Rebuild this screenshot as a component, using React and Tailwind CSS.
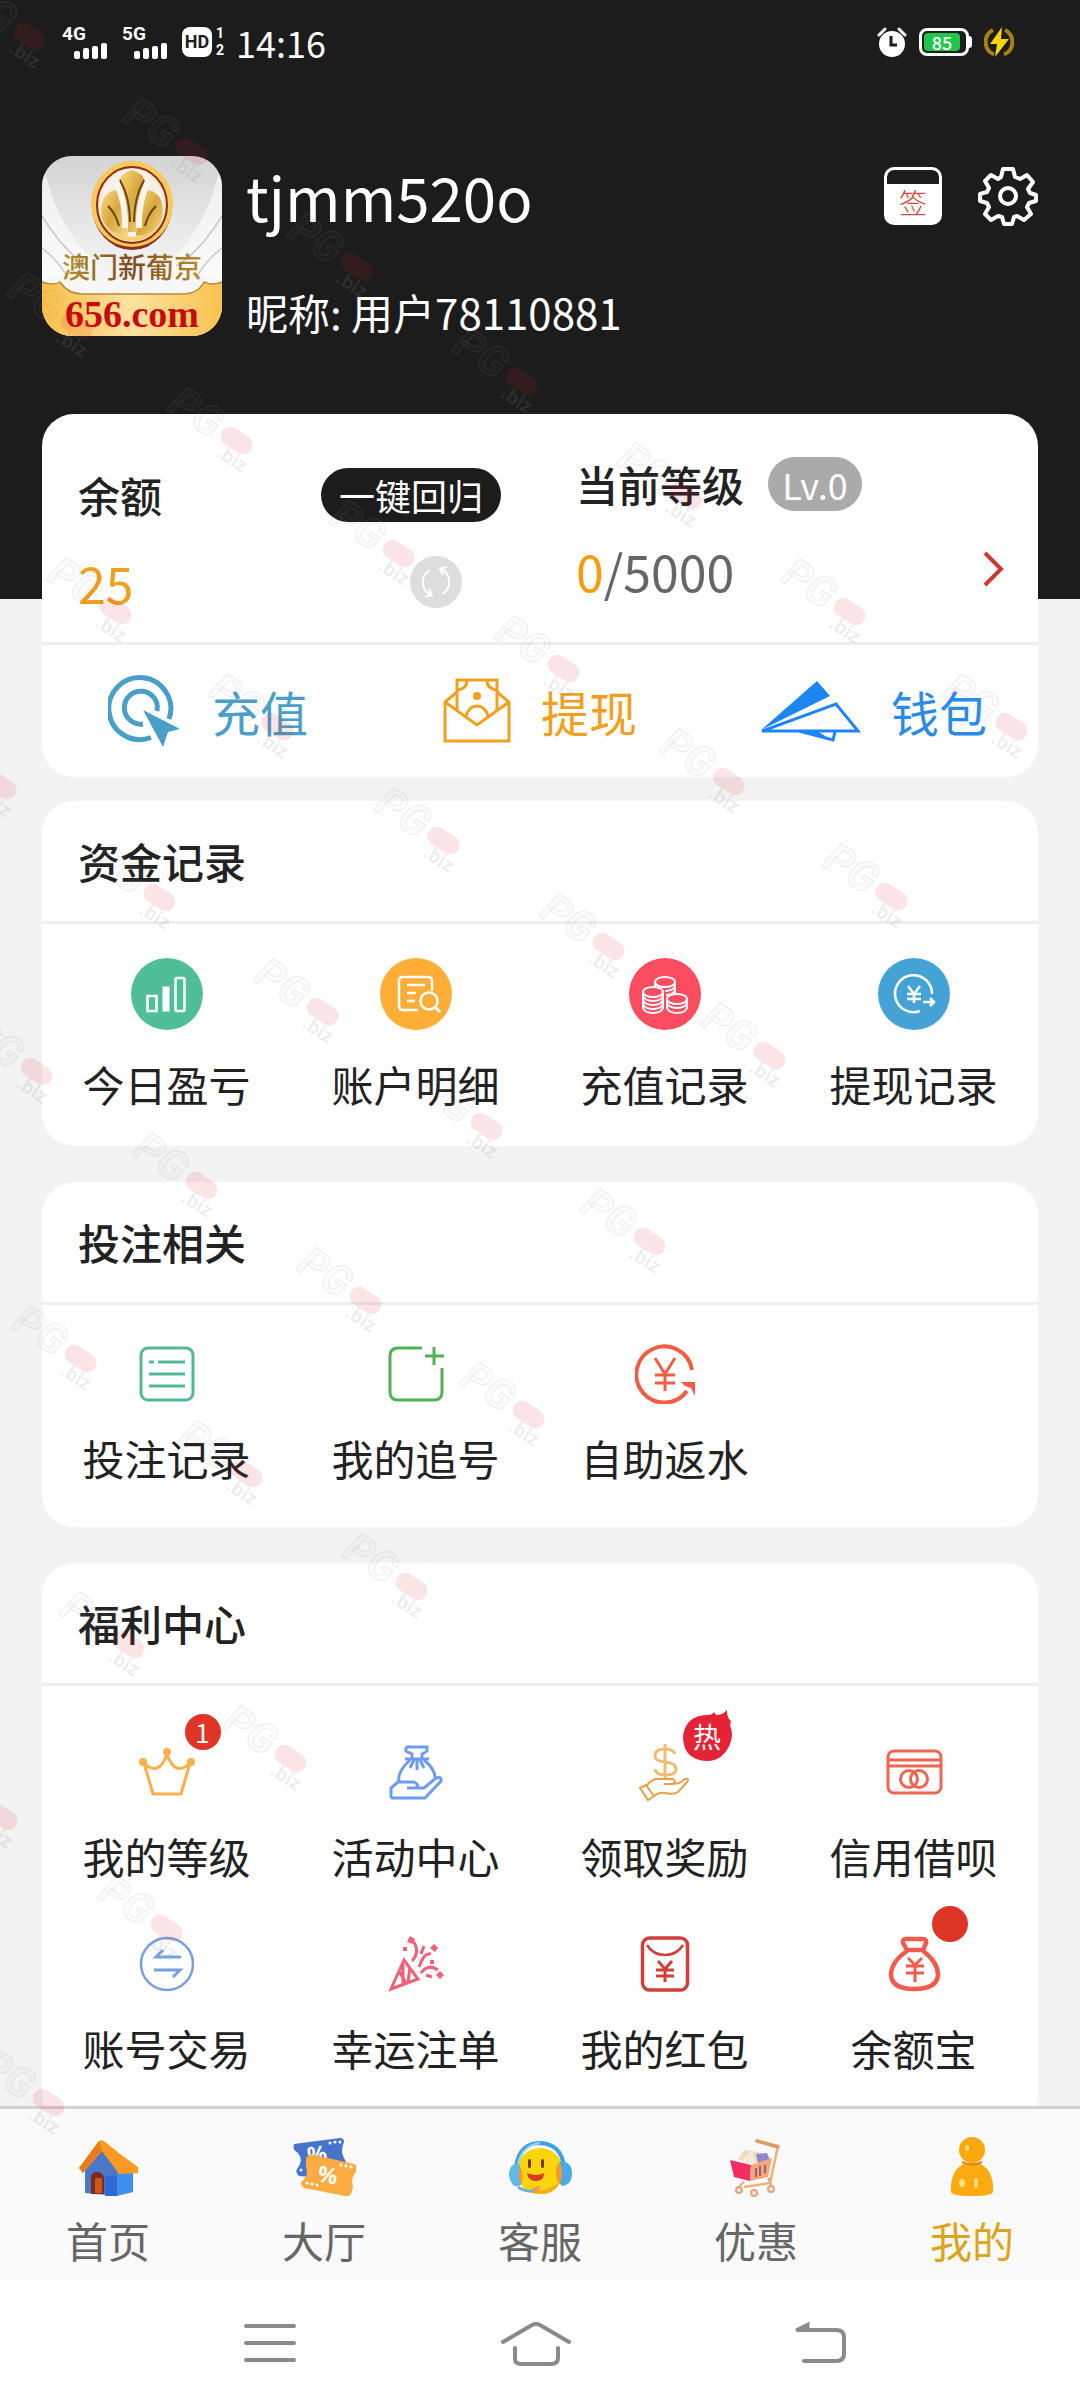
import React from "react";

/* ---------- status bar ---------- */

function Signal({ label }) {
  return (
    <span className="flex flex-col">
      <span className="font-[Roboto,sans-serif] text-[19px] leading-[18px] font-bold">{label}</span>
      <svg className="ml-3 h-4 w-9" viewBox="0 0 36 16" fill="currentColor" aria-hidden="true">
        <rect x="0" y="8" width="6" height="8" rx="2" />
        <rect x="9" y="5" width="6" height="11" rx="2" />
        <rect x="18" y="3" width="6" height="13" rx="2" />
        <rect x="27" y="0" width="6" height="16" rx="2" />
      </svg>
    </span>
  );
}

function StatusBar() {
  return (
    <div className="flex h-[84px] items-center justify-between pr-[66px] pl-[62px]">
      <div className="flex items-center gap-3">
        <Signal label="4G" />
        <Signal label="5G" />
        <span className="flex items-center gap-1 font-[Roboto,sans-serif] font-bold">
          <span className="flex h-[30px] w-[30px] items-center justify-center rounded-lg bg-white text-[18px] leading-none text-[#1c1c1c]">
            HD
          </span>
          <span className="flex flex-col text-[14px] leading-[17px]">
            <span>1</span>
            <span>2</span>
          </span>
        </span>
        <span className="text-[36px] leading-[44px]">14:16</span>
      </div>
      <div className="flex items-center gap-3">
        <svg className="h-8 w-[30px]" viewBox="0 0 30 32" aria-hidden="true">
          <circle cx="15" cy="18" r="13" fill="#fff" />
          <path d="M2 9 L8 3 M28 9 L22 3" stroke="#fff" strokeWidth="3" strokeLinecap="round" />
          <path d="M14 10 V19 H20" fill="none" stroke="#1c1c1c" strokeWidth="3" />
        </svg>
        <span className="flex items-center">
          <span className="flex h-7 w-[50px] rounded-lg border-[3px] border-white p-[2px]">
            <span className="flex w-[36px] items-center justify-center rounded-sm bg-[#1fc64a] text-[18px] leading-none font-medium text-white">
              85
            </span>
          </span>
          <span className="h-3 w-[3px] rounded-r bg-white" />
        </span>
        <svg className="h-[30px] w-[30px]" viewBox="0 0 30 30" aria-hidden="true">
          <path d="M9 3 A13.5 13.5 0 0 0 10 27.500 M21 3 A13.500 13.500 0 0 1 20 27.500" fill="none" stroke="#a68210" strokeWidth="4" />
          <path d="M18 0 L6 17 H13 L11 30 L25 12 H17 Z" fill="#fdd20e" />
        </svg>
      </div>
    </div>
  );
}

/* ---------- profile ---------- */

function Avatar() {
  return (
    <svg className="h-[180px] w-[180px] shrink-0 rounded-[30px]" viewBox="0 0 180 180" role="img" aria-label="澳门新葡京 656.com">
      <defs>
        <linearGradient id="silver" x1="0" y1="0" x2="0" y2="1">
          <stop offset="0" stopColor="#d4d4d5" />
          <stop offset="0.7" stopColor="#f7f7f8" />
        </linearGradient>
        <linearGradient id="gold" x1="0" y1="0" x2="1" y2="0">
          <stop offset="0" stopColor="#f9bf48" />
          <stop offset="0.5" stopColor="#fde2a0" />
          <stop offset="1" stopColor="#f9c24e" />
        </linearGradient>
        <linearGradient id="coin" x1="0" y1="0" x2="1" y2="1">
          <stop offset="0" stopColor="#fbdc7e" />
          <stop offset="0.5" stopColor="#d6a740" />
          <stop offset="1" stopColor="#f6d683" />
        </linearGradient>
        <linearGradient id="letters" x1="0" y1="0" x2="1" y2="0">
          <stop offset="0" stopColor="#b8912e" />
          <stop offset="0.5" stopColor="#7a4a1c" />
          <stop offset="1" stopColor="#b8912e" />
        </linearGradient>
      </defs>
      <rect width="180" height="180" fill="url(#silver)" />
      <path d="M4 20 Q20 80 60 112 L0 124 V20 Z" fill="#fff" opacity="0.55" />
      <path d="M176 20 Q160 80 120 112 L180 124 V20 Z" fill="#fff" opacity="0.55" />
      <path d="M0 60 Q22 96 46 110 M180 60 Q158 96 134 110 M0 92 Q16 104 26 122 M180 92 Q164 104 154 122" fill="none" stroke="#c9c9cc" strokeWidth="1.500" />
      <path d="M0 126 Q12 130 18 126 Q26 138 40 138 H140 Q156 138 162 126 Q170 130 180 126 V180 H0 Z" fill="url(#gold)" />
      <path d="M0 126 Q12 130 18 126 Q26 138 40 138 H140 Q156 138 162 126 Q170 130 180 126" fill="none" stroke="#b68b35" strokeWidth="1.500" />
      <ellipse cx="90" cy="50" rx="40" ry="44" fill="#8e2a16" />
      <ellipse cx="90" cy="48" rx="41" ry="43" fill="#f5c95e" />
      <ellipse cx="90" cy="49" rx="35" ry="38" fill="#f3e3c0" stroke="#8e2a16" strokeWidth="2" />
      <ellipse cx="90" cy="49" rx="32" ry="36" fill="#f4f1ea" />
      <path d="M62 66 Q90 96 118 66 Q112 84 90 85 Q68 84 62 66 Z" fill="#f3cf70" />
      <path d="M90 14 Q108 20 100 32 Q94 52 94 76 H86 Q86 52 80 32 Q72 20 90 14 Z" fill="url(#coin)" />
      <path d="M74 34 Q56 38 60 62 Q66 78 86 80 Q86 54 74 34 Z" fill="url(#coin)" />
      <path d="M106 34 Q124 38 120 62 Q114 78 94 80 Q94 54 106 34 Z" fill="url(#coin)" />
      <path d="M74 26 Q84 46 83 72 M106 26 Q96 46 97 72" fill="none" stroke="#faf5ea" strokeWidth="6" />
      <path d="M78 24 Q88 42 88 66 M102 24 Q92 42 92 66 M66 50 Q74 58 77 70 M114 50 Q106 58 103 70" fill="none" stroke="#6e4212" strokeWidth="2" />
      <text x="90" y="122" textAnchor="middle" fontSize="28" fontWeight="500" fontFamily="'Noto Sans CJK SC', sans-serif" fill="url(#letters)">澳门新葡京</text>
      <text x="90" y="171" textAnchor="middle" fontSize="38" fontWeight="700" fontFamily="'Liberation Serif', serif" fill="#c80a10">656.com</text>
    </svg>
  );
}

function GearIcon() {
  return (
    <svg className="h-[60px] w-[60px]" viewBox="0 0 60 60" fill="none" stroke="#fff" strokeWidth="4" strokeLinejoin="round" aria-hidden="true">
      <path d="M25 3 H35 L37 11 L42 13 L49 9 L55 16 L50 23 L52 27 L58 29 V35 L51 37 L49 41 L53 48 L46 54 L39 50 L36 51 L34 58 H26 L24 51 L20 50 L13 54 L7 48 L11 41 L9 37 L2 35 V28 L9 26 L11 22 L7 15 L13 9 L20 13 L23 11 Z" />
      <circle cx="30" cy="30" r="8" />
    </svg>
  );
}

function Profile() {
  return (
    <div className="flex items-start gap-6 px-[42px] pt-[72px]">
      <Avatar />
      <div className="min-w-0 flex-1 text-white">
        <h1 className="text-[60px] leading-[80px]">tjmm520o</h1>
        <p className="mt-[46px] text-[42px] leading-[60px]">昵称: 用户78110881</p>
      </div>
      <div className="mt-[10px] flex items-center gap-9">
        <button type="button" aria-label="签到" className="flex h-[58px] w-[58px] flex-col overflow-hidden rounded-[10px] border-[3px] border-white bg-white">
          <span className="h-[14px] w-full shrink-0 rounded-t-md bg-[#1c1c1c]" />
          <span className="w-full text-center text-[28px] leading-[36px] font-light text-[#cc4a40]">签</span>
        </button>
        <button type="button" aria-label="设置">
          <GearIcon />
        </button>
      </div>
    </div>
  );
}

/* ---------- balance card ---------- */

function RechargeIcon() {
  return (
    <svg className="h-[74px] w-[74px]" viewBox="0 0 74 74" aria-hidden="true">
      <g fill="none" stroke="#4a9fc9" strokeWidth="5">
        <path d="M43 63.500 A31 31 0 1 1 61 45" />
        <path d="M35 50 A16.500 16.500 0 1 1 49 37" />
      </g>
      <path d="M35 36 L72 55 L60 58 L55 73 Z" fill="#4a9fc9" />
    </svg>
  );
}

function WithdrawIcon() {
  return (
    <svg className="h-[66px] w-[68px]" viewBox="0 0 68 66" fill="none" stroke="#f0a01e" strokeWidth="3" aria-hidden="true">
      <path d="M14 14 L2 24 V63 H66 V24 L54 14" />
      <path d="M2 24 L34 47 L66 24" />
      <path d="M14 32 V2 H54 V32" />
      <path d="M24 2 Q24 11 14 12 M44 2 Q44 11 54 12" />
      <circle cx="34" cy="18" r="4" fill="#f0a01e" stroke="none" />
      <path d="M23 38 Q26 28 34 28 Q42 28 45 38" />
    </svg>
  );
}

function WalletIcon() {
  return (
    <svg className="h-[62px] w-[104px]" viewBox="0 0 104 62" aria-hidden="true">
      <path d="M60 1 L73 16 L4 50 Z" fill="#1b86f2" />
      <path d="M5 51 L79 24 L101 51 Z" fill="none" stroke="#1b86f2" strokeWidth="3" />
      <path d="M42 51 L76 60 L78 52" fill="none" stroke="#1b86f2" strokeWidth="3" />
      <path d="M44 51 L70 57 L60 51 Z" fill="#1b86f2" />
    </svg>
  );
}

const ACTIONS = [
  { label: "充值", icon: <RechargeIcon />, tone: "text-[#4a9fc9]" },
  { label: "提现", icon: <WithdrawIcon />, tone: "text-[#f0a01e]" },
  { label: "钱包", icon: <WalletIcon />, tone: "text-[#2b8ae8]" },
];

function BalanceCard() {
  return (
    <section className="shrink-0 overflow-hidden rounded-[32px] bg-white">
      <div className="grid h-[228px] grid-cols-2">
        <div className="flex flex-col pt-[54px] pl-[36px]">
          <div className="flex h-[54px] items-center justify-between pr-[39px]">
            <span className="text-[42px] leading-[56px] font-medium">余额</span>
            <button type="button" className="h-[54px] w-[180px] rounded-full bg-[#1c1c1c] text-[36px] leading-[50px] text-white">
              一键回归
            </button>
          </div>
          <div className="mt-[30px] flex h-[60px] items-center justify-between pr-[78px]">
            <span className="text-[50px] leading-[60px] text-[#efa01f]">25</span>
            <button type="button" aria-label="刷新" className="flex h-[52px] w-[52px] items-center justify-center rounded-full bg-[#dddddd]">
              <svg className="h-9 w-9" viewBox="0 0 36 36" fill="none" stroke="#fff" strokeWidth="2" aria-hidden="true">
                <path d="M13 31 A14 14 0 0 1 12 6 M23 5 A14 14 0 0 1 24 30" />
                <path d="M7 33 L14 31 L11 25 M29 3 L22 5 L25 11" />
              </svg>
            </button>
          </div>
        </div>
        <button type="button" className="flex items-center justify-between pr-[34px] pl-[36px] text-left">
          <span className="flex flex-col self-start pt-[42px]">
            <span className="flex items-center gap-6">
              <span className="text-[42px] leading-[56px] font-medium">当前等级</span>
              <span className="flex h-[54px] w-[94px] items-center justify-center rounded-full bg-[#aaaaaa] text-[36px] leading-none text-white">
                Lv.0
              </span>
            </span>
            <span className="mt-[28px] text-[50px] leading-[60px] text-[#666666]">
              <span className="text-[#f59c0c]">0</span>/5000
            </span>
          </span>
          <svg className="mt-[82px] h-[36px] w-[22px]" viewBox="0 0 22 36" fill="none" stroke="#cb3a30" strokeWidth="4" aria-hidden="true">
            <path d="M3 2 L19 18 L3 34" />
          </svg>
        </button>
      </div>
      <div className="grid h-[135px] grid-cols-3 border-t-[3px] border-[#eeeeee]">
        {ACTIONS.map((a) => (
          <button key={a.label} type="button" className="flex items-center justify-center gap-[30px]">
            {a.icon}
            <span className={"text-[48px] leading-[64px] " + a.tone}>{a.label}</span>
          </button>
        ))}
      </div>
    </section>
  );
}

/* ---------- section icons ---------- */

function Disc({ color, children }) {
  return (
    <svg className="h-[72px] w-[72px]" viewBox="0 0 72 72" fill="none" stroke="#fff" strokeWidth="2.500" aria-hidden="true">
      <circle cx="36" cy="36" r="36" fill={color} stroke="none" />
      {children}
    </svg>
  );
}

function Glyph({ color, width = 3, children }) {
  return (
    <svg className="h-[60px] w-[60px]" viewBox="0 0 60 60" fill="none" stroke={color} strokeWidth={width} aria-hidden="true">
      {children}
    </svg>
  );
}

const ProfitIcon = (
  <Disc color="#50bf98">
    <rect x="16.500" y="38" width="9" height="15" />
    <rect x="32" y="29" width="6" height="24" fill="#fff" strokeWidth="1" />
    <rect x="44.500" y="20" width="9" height="33" rx="1" />
  </Disc>
);

const DetailIcon = (
  <Disc color="#fdae36">
    <path d="M38 52 H23 Q19 52 19 48 V23 Q19 19 23 19 H48 Q52 19 52 23 V33" />
    <path d="M27 27 H45 M27 35 H36 M27 43 H35" />
    <circle cx="49" cy="43" r="8.500" />
    <path d="M55 49 L60 54" strokeWidth="3" />
  </Disc>
);

const CoinsIcon = (
  <Disc color="#fc4c60">
    <g strokeWidth="2">
      <ellipse cx="36" cy="24" rx="10" ry="5" />
      <path d="M46 24 V36 M26 24 V29 M34 29 M46 28 Q44 33 36 33 M46 32 Q44 37 37 37" />
      <ellipse cx="24" cy="34" rx="10" ry="5" />
      <path d="M14 34 V50 Q16 55 24 55 Q32 55 34 50 V34 M14 38 Q16 43 24 43 Q32 43 34 38 M14 42 Q16 47 24 47 Q32 47 34 42 M14 46 Q16 51 24 51 Q32 51 34 46" />
      <ellipse cx="48" cy="41" rx="10" ry="5" />
      <path d="M38 41 V50 Q40 55 48 55 Q56 55 58 50 V41 M38 45 Q40 50 48 50 Q56 50 58 45" />
    </g>
  </Disc>
);

const WithdrawRecordIcon = (
  <Disc color="#45a2d5">
    <path d="M42 53 A18.500 18.500 0 1 1 54 36" />
    <path d="M30 28 L36 36 L42 28 M36 36 V45 M29 36 H43 M29 41 H43" />
    <path d="M45 44 H56 M52 40 L56 44 L52 48" />
  </Disc>
);

const ListIcon = (
  <Glyph color="#54b896">
    <rect x="4" y="4" width="52" height="52" rx="7" />
    <path d="M12 18 H17 M21 18 H48 M12 30 H48 M12 42 H48" />
  </Glyph>
);

const ChaseIcon = (
  <Glyph color="#52b054">
    <path d="M36 4 H12 Q4 4 4 12 V48 Q4 56 12 56 H48 Q56 56 56 48 V24" />
    <path d="M48 3 V21 M39 12 H58" />
  </Glyph>
);

const RebateIcon = (
  <Glyph color="#f25c43" width={4}>
    <path d="M57 26 A28 28 0 1 0 52 47" />
    <path d="M46 38 H60 V52 L56 44 L50 42 Z" fill="#f25c43" stroke="none" />
    <path d="M20 14 L30 30 L40 14 M30 30 V47 M20 31 H40 M20 39 H40" strokeWidth="3" />
  </Glyph>
);

const CrownIcon = (
  <Glyph color="#f9b14a">
    <path d="M7 21 L16 52 H44 L53 21 Q46 28 40 26 Q34 24 30 12 Q26 24 20 26 Q14 28 7 21 Z" />
    <g fill="#f9b14a" stroke="none">
      <circle cx="30" cy="10" r="4" />
      <circle cx="6" cy="20" r="4" />
      <circle cx="54" cy="20" r="4" />
    </g>
  </Glyph>
);

const MoneyBagHandIcon = (
  <Glyph color="#6f9bed">
    <path d="M20 5 H41 V9 L36 12 V17 M20 5 V9 L26 12 V17 M19 17 H43" />
    <path d="M24 18 Q11 30 13 39 M38 18 Q50 28 49 37 M31 18 V28 M28 18 L24 26 M34 18 L38 26" />
    <path d="M5 56 V46 L12 40 H28 Q34 43 30 46 H21 M30 46 H38 L50 36 Q56 34 55 39 L39 56 H5" />
  </Glyph>
);

const RewardIcon = (
  <Glyph color="#e0a24e" width={2}>
    <path d="M40 12 Q38 7 30 7 Q20 7 20 14 Q20 19 30 20 Q41 21 41 27 Q41 33 30 33 Q21 33 20 27 M30 2 V38" stroke="#eebc74" strokeWidth="3" />
    <path d="M5 46 L11 43 L19 54 L13 58 Z M12 43 Q18 36 24 37 L38 37 Q42 40 37 42 H29 M37 42 L44 41 L50 37 Q55 36 52 40 L43 50 Q38 53 30 51 Q24 50 19 54" />
  </Glyph>
);

const CreditIcon = (
  <Glyph color="#ee6551">
    <rect x="4" y="9" width="53" height="42" rx="6" />
    <path d="M5 18 H56 M5 24 H56" />
    <circle cx="25" cy="37" r="8.500" />
    <circle cx="35" cy="37" r="8.500" />
  </Glyph>
);

const SwapIcon = (
  <Glyph color="#75a0e2">
    <circle cx="30" cy="30" r="26" strokeWidth="2.500" />
    <path d="M44 23 H19 L26 16 M17 36 H43 L36 43" />
  </Glyph>
);

const PartyIcon = (
  <Glyph color="#ee6178">
    <path d="M18 26 L5 55 L32 45 Z M13 37 L20 49 M24 33 L22 48 M17 30 V50" />
    <path d="M26 27 Q34 19 28 8 M33 33 Q38 18 45 20 M35 39 Q42 29 52 36 M35 20 L38 12 M40 41 L46 43" />
    <g fill="#ee6178" stroke="none">
      <path d="M24 2 L29 5 L27 10 L21 8 Z M48 10 L52 14 L49 18 L44 14 Z M54 37 L58 41 L54 45 L50 41 Z M17 13 h4 v4 h-4 Z M44 26 h4 v4 h-4 Z" />
    </g>
  </Glyph>
);

const RedPacketIcon = (
  <Glyph color="#d0403a">
    <rect x="7.500" y="4" width="45" height="52" rx="7" strokeWidth="3.500" />
    <path d="M12 11 Q18 21 30 21 Q42 21 48 11" strokeWidth="2.500" />
    <path d="M23 27 L30 35 L37 27 M30 35 V48 M21 36 H39 M21 42 H39" />
  </Glyph>
);

const YuebaoIcon = (
  <Glyph color="#ef5b4e" width={4.5}>
    <path d="M23 16 L19 9 Q18 5 22 5 H39 Q43 5 42 9 L39 16 Z" />
    <path d="M23 17 Q7 28 7 41 Q8 55 30 55 Q53 55 54 41 Q54 28 39 17" />
    <path d="M24 24 L31 31 L38 24 M31 31 V48 M22 32 H40 M22 39 H40" strokeWidth="3" />
  </Glyph>
);

function Badge({ children }) {
  return (
    <span className="absolute -top-7 left-full -ml-3 flex h-9 w-9 items-center justify-center rounded-full bg-[#de3527] text-[26px] leading-none text-white">
      {children}
    </span>
  );
}

const HotBadge = (
  <span className="absolute -top-8 left-full -ml-3">
    <svg className="h-[52px] w-[50px]" viewBox="0 0 50 52" role="img" aria-label="热">
      <path d="M24 5 Q30 5 31 2 L33 5 Q40 5 44 0 Q44 6 46 9 L48 11 L47 15 Q51 25 47 34 Q40 51 24 51 Q1 50 0 28 Q1 6 24 5 Z" fill="#e42336" />
      <text x="24" y="38" textAnchor="middle" fontSize="28" fill="#fff" fontFamily="'Noto Sans CJK SC', sans-serif">热</text>
    </svg>
  </span>
);

/* ---------- sections ---------- */

function Section({ title, pad, children }) {
  return (
    <section className="shrink-0 rounded-[32px] bg-white">
      <h2 className="flex h-[123px] items-center border-b-[3px] border-[#eeeeee] px-[36px] text-[42px] leading-[60px] font-medium">
        {title}
      </h2>
      <div className={"grid grid-cols-4 " + pad}>{children}</div>
    </section>
  );
}

function Tile({ icon, label, badge }) {
  return (
    <button type="button" className="flex flex-col items-center gap-6">
      <span className="relative">
        {icon}
        {badge}
      </span>
      <span className="text-[42px] leading-[60px]">{label}</span>
    </button>
  );
}

/* ---------- tab bar ---------- */

const HomeTab = (
  <svg className="h-16 w-16" viewBox="0 0 64 64" aria-hidden="true">
    <path d="M9 30 L25 12 L42 32 V60 L9 57 Z" fill="#4a78c8" />
    <path d="M41 34 L57 36 V56 L41 60 Z" fill="#3f8ff0" />
    <path d="M29 60 V40 H41 V60 Z" fill="#2f68d0" />
    <path d="M15 58 V40 Q16 36 21 36 Q27 36 28 42 V58 Z" fill="#7c2c1c" />
    <path d="M19 57 V42 H26 V57 Z" fill="#d0551c" />
    <path d="M23 5 L3 32 L7 37 L26 15 L43 38 L62 37 V31 Q46 20 29 6 Q26 3 23 5 Z" fill="#fb9a22" />
    <path d="M23 5 L3 32 L7 37 L26 14 Z" fill="#e97c16" />
  </svg>
);

const HallTab = (
  <svg className="h-16 w-16" viewBox="0 0 64 64" aria-hidden="true">
    <path d="M2 8 L48 2 Q52 2 52 6 Q48 15 52 22 L54 26 L18 42 Q14 40 7 40 Q3 36 5 33 Q12 24 6 17 Q0 14 2 8 Z" fill="#4673ce" />
    <g fontFamily="'Noto Sans', sans-serif" fontWeight="700" fill="#fff">
      <text x="15" y="26" fontSize="22" transform="rotate(-6 25 18)">%</text>
      <path d="M18 18 L62 28 Q67 30 65 35 Q58 42 61 51 L59 58 Q57 61 53 60 L12 52 Q9 50 9 46 Q17 40 14 31 Q13 19 18 18 Z" fill="#fcac42" />
      <text x="26" y="47" fontSize="22" transform="rotate(12 36 39)">%</text>
    </g>
    <g fill="#fff">
      <circle cx="38" cy="7" r="1.500" />
      <circle cx="43" cy="6" r="1.500" />
      <circle cx="48" cy="6" r="1.500" />
      <circle cx="9" cy="34" r="1.500" />
      <circle cx="15" cy="47" r="1.500" />
      <circle cx="20" cy="48" r="1.500" />
      <circle cx="25" cy="49" r="1.500" />
      <circle cx="49" cy="29" r="1.500" />
      <circle cx="54" cy="30" r="1.500" />
      <circle cx="59" cy="31" r="1.500" />
    </g>
  </svg>
);

const ServiceTab = (
  <svg className="h-16 w-16" viewBox="0 0 64 64" aria-hidden="true">
    <circle cx="32" cy="35" r="23" fill="#fbd40e" />
    <path d="M12 50 Q32 62 53 45 Q46 59 32 58 Q19 58 12 50 Z" fill="#f0b010" />
    <path d="M8 30 Q12 7 32 7 Q53 8 56 30" fill="none" stroke="#3fa0e2" strokeWidth="4" />
    <path d="M10 27 Q15 9 32 7" fill="none" stroke="#94d2f6" strokeWidth="2" />
    <path d="M10 27 Q15 32 13 49 Q7 53 3 46 Q-1 38 3 31 Q6 27 10 27 Z" fill="#5fb8ee" />
    <path d="M12 30 Q17 40 13 49 Q9 40 12 30 Z" fill="#f59a2c" />
    <path d="M53 25 Q64 26 64 37 Q64 49 54 50 Q48 44 49 36 Q49 28 53 25 Z" fill="#4ba9e8" />
    <ellipse cx="51" cy="37" rx="3" ry="10" fill="#f59a2c" />
    <rect x="20" y="23" width="3" height="9" rx="1.500" fill="#6b3a10" />
    <rect x="33" y="23" width="3" height="9" rx="1.500" fill="#6b3a10" />
    <path d="M19 37 Q28 41 36 37 Q36 45 28 45 Q20 45 19 37 Z" fill="#d43a24" />
    <path d="M10 51 Q16 56 26 55" fill="none" stroke="#5cb3ea" strokeWidth="2.500" />
    <path d="M23 53 Q28 50 32 50 Q33 55 27 57 Z" fill="#e99a52" />
  </svg>
);

const DealsTab = (
  <svg className="h-16 w-16" viewBox="0 0 64 64" aria-hidden="true">
    <path d="M33 5 L54 10 L46 47 L20 51" fill="none" stroke="#eeb274" strokeWidth="2.500" />
    <path d="M33 5 L54 11" stroke="#df9c62" strokeWidth="3.500" strokeLinecap="round" />
    <path d="M14 24 L20 14 L34 16 L46 20 L44 28 Z" fill="#efd9c0" />
    <path d="M32 18 L43 17 L46 25 L34 27 Z" fill="#8e86cf" />
    <path d="M17 26 L28 14 L32 28 Z" fill="#f7ead6" />
    <path d="M6 24 L27 29 L26 45 L10 41 Z" fill="#f32c62" />
    <path d="M27 29 L48 22 L44 41 L26 45 Z" fill="#f0a878" />
    <path d="M32 32 V41 M36 30 V40 M41 29 V37" stroke="#a05a7c" strokeWidth="2" />
    <path d="M20 46 Q14 50 16 54 M44 42 Q48 48 47 52" fill="none" stroke="#e8a270" strokeWidth="2" />
    <g fill="#f6e6da" stroke="#e9a07c" strokeWidth="2">
      <circle cx="15" cy="54" r="3" />
      <circle cx="30" cy="57" r="3" />
      <circle cx="47" cy="53" r="3" />
    </g>
  </svg>
);

const MineTab = (
  <svg className="h-16 w-16" viewBox="0 0 64 64" aria-hidden="true">
    <path d="M11 56 Q10 34 24 28 Q32 25 40 28 Q54 34 53 56 Q52 60 32 60 Q12 60 11 56 Z" fill="#fcaa10" />
    <circle cx="32" cy="14" r="13" fill="#fba70e" />
    <path d="M22 26 Q32 31 42 26" fill="none" stroke="#df8704" strokeWidth="2" />
    <ellipse cx="27" cy="12" rx="2" ry="3" fill="#ffdc7c" />
    <ellipse cx="22" cy="47" rx="3" ry="4" fill="#ffdf80" />
    <ellipse cx="36" cy="47" rx="2" ry="5" fill="#ffdf80" />
  </svg>
);

const TABS = [
  { label: "首页", icon: HomeTab },
  { label: "大厅", icon: HallTab },
  { label: "客服", icon: ServiceTab },
  { label: "优惠", icon: DealsTab },
  { label: "我的", icon: MineTab, active: true },
];

function TabBar() {
  return (
    <nav className="grid h-[174px] shrink-0 grid-cols-5 border-t-[3px] border-[#d2d2d2] bg-[#fafafa]">
      {TABS.map((t) => (
        <a key={t.label} href="#" className="flex flex-col items-center pt-[27px]">
          {t.icon}
          <span className={"mt-[10px] text-[42px] leading-[60px] " + (t.active ? "text-[#dba41c]" : "text-[#666666]")}>{t.label}</span>
        </a>
      ))}
    </nav>
  );
}

function SystemBar() {
  const line = { fill: "none", stroke: "#8a8a8a", strokeWidth: 4, strokeLinecap: "round", "aria-hidden": true };
  return (
    <div className="flex h-[128px] shrink-0 items-center justify-around bg-white px-[132px]">
      <button type="button" aria-label="最近任务">
        <svg className="h-11 w-[70px]" viewBox="0 0 70 44" {...line}>
          <path d="M14 4 H62 M14 21 H62 M14 38 H62" />
        </svg>
      </button>
      <button type="button" aria-label="主屏幕">
        <svg className="h-11 w-[70px]" viewBox="0 0 70 44" {...line}>
          <path d="M2 20 L31 3 Q35 1 39 3 L68 20 M14 26 V37 Q14 42 20 42 H50 Q57 42 57 36 V26" />
        </svg>
      </button>
      <button type="button" aria-label="返回">
        <svg className="h-11 w-[78px]" viewBox="-16 0 78 44" {...line}>
          <path d="M12 8 H50 Q58 8 58 15 V32 Q58 39 50 39 H18" />
          <path d="M10 8 L22 2 V8 Z" fill="#8a8a8a" strokeWidth="3" />
        </svg>
      </button>
    </div>
  );
}

/* ---------- watermark ---------- */

const MARKS = [
  [31, 38], [193, 153], [358, 268], [523, 383], [687, 497], [851, 613], [1013, 728],
  [78, 327], [238, 442], [400, 555], [565, 670], [730, 783], [893, 898],
  [117, 612], [279, 728], [445, 842], [610, 948], [771, 1057],
  [2, 787], [161, 899], [324, 1013], [488, 1128], [651, 1243],
  [38, 1073], [203, 1187], [367, 1302], [530, 1416],
  [82, 1360], [248, 1475], [413, 1588],
  [130, 1646], [292, 1760], [3, 1818], [168, 1930], [50, 2104],
];

function Watermark() {
  return (
    <svg className="pointer-events-none absolute inset-0 h-full w-full" aria-hidden="true">
      {MARKS.map(([x, y]) => (
        <g key={x + "-" + y} transform={`translate(${x} ${y}) rotate(33)`} fontFamily="Roboto, sans-serif" fontWeight="700" fill="#8c8c8c">
          <text x="-78" y="12" fontSize="42" fontStyle="italic" fillOpacity="0.05" stroke="#8c8c8c" strokeOpacity="0.16">PG</text>
          <rect x="-19" y="-10" width="34" height="19" rx="9" fill="#e0202c" fillOpacity="0.12" />
          <text x="-12" y="24" fontSize="20" fillOpacity="0.16">.biz</text>
        </g>
      ))}
    </svg>
  );
}

/* ---------- page ---------- */

export default function App() {
  return (
    <div className="relative flex h-screen flex-col overflow-hidden bg-[#f3f3f3] font-['Noto_Sans_CJK_SC',sans-serif] text-[#222222]">
      <header className="shrink-0 bg-[#1c1c1c] pb-[257px] text-white">
        <StatusBar />
        <Profile />
      </header>
      <main className="-mt-[185px] flex min-h-0 flex-1 flex-col overflow-y-auto px-[42px] [scrollbar-width:none]">
        <BalanceCard />
        <div className="mt-6 flex shrink-0 flex-col gap-9">
          <Section title="资金记录" pad="pt-[34px] pb-[32px]">
            <Tile icon={ProfitIcon} label="今日盈亏" />
            <Tile icon={DetailIcon} label="账户明细" />
            <Tile icon={CoinsIcon} label="充值记录" />
            <Tile icon={WithdrawRecordIcon} label="提现记录" />
          </Section>
          <Section title="投注相关" pad="pt-[39px] pb-[39px]">
            <Tile icon={ListIcon} label="投注记录" />
            <Tile icon={ChaseIcon} label="我的追号" />
            <Tile icon={RebateIcon} label="自助返水" />
          </Section>
          <Section title="福利中心" pad="gap-y-[48px] pt-[56px] pb-[48px]">
            <Tile icon={CrownIcon} label="我的等级" badge={<Badge>1</Badge>} />
            <Tile icon={MoneyBagHandIcon} label="活动中心" />
            <Tile icon={RewardIcon} label="领取奖励" badge={HotBadge} />
            <Tile icon={CreditIcon} label="信用借呗" />
            <Tile icon={SwapIcon} label="账号交易" />
            <Tile icon={PartyIcon} label="幸运注单" />
            <Tile icon={RedPacketIcon} label="我的红包" />
            <Tile icon={YuebaoIcon} label="余额宝" badge={<Badge />} />
          </Section>
        </div>
      </main>
      <TabBar />
      <SystemBar />
      <Watermark />
    </div>
  );
}
